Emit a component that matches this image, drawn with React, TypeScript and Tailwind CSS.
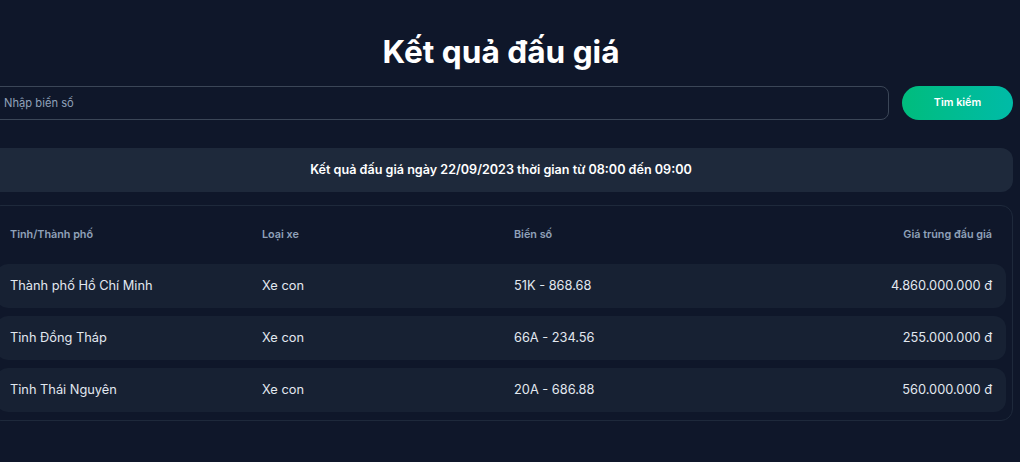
const rows = [
  { city: "Thành phố Hồ Chí Minh", type: "Xe con", plate: "51K - 868.68", price: "4.860.000.000 đ" },
  { city: "Tỉnh Đồng Tháp", type: "Xe con", plate: "66A - 234.56", price: "255.000.000 đ" },
  { city: "Tỉnh Thái Nguyên", type: "Xe con", plate: "20A - 686.88", price: "560.000.000 đ" },
];

export default function App() {
  return (
    <div className="min-h-screen overflow-hidden bg-[#0f172a] font-['Inter','Noto_Sans',sans-serif] text-white">
      <div className="-ml-[11px] w-[1024px] pt-[34px]">
        <h1 className="text-center text-[31.6px] font-bold leading-9">Kết quả đấu giá</h1>

        <div className="mt-4 flex gap-[13px]">
          <input
            placeholder="Nhập biến số"
            className="h-[34px] flex-1 rounded-lg border border-[#3b4657] bg-transparent px-[14px] text-[11.2px] text-slate-200 outline-none placeholder:text-slate-400"
          />
          <button className="h-[34px] w-[111px] rounded-full bg-gradient-to-r from-emerald-500 to-teal-500 text-[10.8px] font-semibold text-white">
            Tìm kiếm
          </button>
        </div>

        <div className="mt-7 flex h-[44px] items-center justify-center rounded-xl bg-[#1e293b] text-[12.6px] font-semibold">
          Kết quả đấu giá ngày 22/09/2023 thời gian từ 08:00 đến 09:00
        </div>

        <div className="mt-[13px] rounded-xl border border-[#1e293b] px-1.5 pt-1.5 pb-2">
          <div className="grid h-[46px] grid-cols-[252px_252px_1fr_auto] items-center px-[14px] text-[10.8px] font-semibold text-slate-400">
            <span>Tỉnh/Thành phố</span>
            <span>Loại xe</span>
            <span>Biển số</span>
            <span className="text-right">Giá trúng đấu giá</span>
          </div>
          <div className="mt-1.5 flex flex-col gap-2">
            {rows.map((r) => (
              <div
                key={r.plate}
                className="grid h-[44px] grid-cols-[252px_252px_1fr_auto] items-center rounded-xl bg-[#172133] px-[14px] text-[12.8px] text-slate-200"
              >
                <span>{r.city}</span>
                <span>{r.type}</span>
                <span>{r.plate}</span>
                <span className="text-right">{r.price}</span>
              </div>
            ))}
          </div>
        </div>
      </div>
    </div>
  );
}
